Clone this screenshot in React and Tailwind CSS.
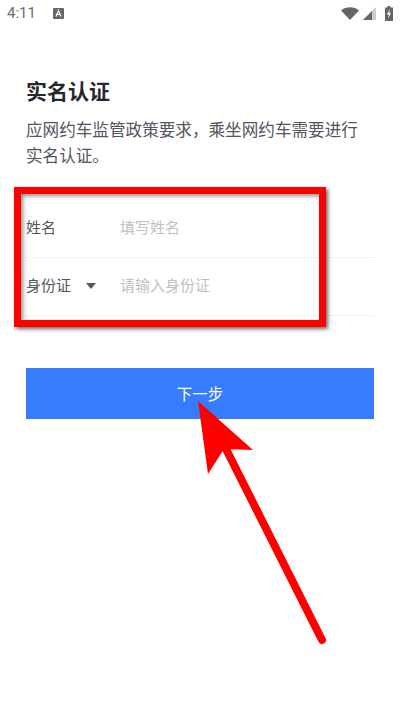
import React from 'react';

const cjk = { fontFamily: '"Noto Sans CJK SC", sans-serif' };

function StatusBar() {
  return (
    <div className="h-[27px] pl-[7px] pr-[7px] flex items-center justify-between">
      <div className="flex items-center gap-[17px]">
        <span className="text-[15px] leading-none text-[#6b6b6b] font-['Roboto',sans-serif]">4:11</span>
        <svg width="11" height="11" viewBox="0 0 11 11">
          <rect width="11" height="11" rx="1" fill="#666" />
          <path d="M3 8.500 5.500 2.500 8 8.500M4 6.500h3" fill="none" stroke="#fff" strokeWidth="1.200" />
        </svg>
      </div>
      <div className="flex items-center gap-[4px]">
        <svg width="18" height="13" viewBox="0 0 18 13">
          <path d="M0 3.500C5-.8 13-.8 18 3.500L9 13Z" fill="#666" />
        </svg>
        <svg width="13" height="13" viewBox="0 0 13 13">
          <path d="M13 0V13H0Z" fill="#ccc" />
          <path d="M9 4V13H0Z" fill="#666" />
        </svg>
        <svg className="ml-[5px]" width="8" height="15" viewBox="0 0 8 15">
          <path d="M2.500 0h3v1.500H8V15H0V1.500h2.500Z" fill="#666" />
          <path d="M4.800 3 2 8.500h1.800L3.200 12.500 6 7H4.200Z" fill="#fff" />
        </svg>
      </div>
    </div>
  );
}

function Field({ label, placeholder, select }) {
  return (
    <div className="h-[58px] pb-[2px] flex items-center border-b border-[#f2f2f4]">
      <div className="w-[94px] flex items-center text-[15px] text-[#55555f]">
        <span>{label}</span>
        {select && <span className="ml-[15px] w-0 h-0 border-x-[5.500px] border-x-transparent border-t-[6px] border-t-[#55555f]" />}
      </div>
      <span className="text-[15px] text-[#c0c0c4]">{placeholder}</span>
    </div>
  );
}

export default function App() {
  return (
    <div className="relative w-[400px] h-[711px] bg-white overflow-hidden" style={cjk}>
      <StatusBar />
      <div className="px-[26px] pt-[48px]">
        <h1 className="text-[21px] leading-[30px] font-bold text-[#26262e]">实名认证</h1>
        <p className="mt-[11px] text-[16.600px] leading-[26px] text-[#55555f]">应网约车监管政策要求，乘坐网约车需要进行实名认证。</p>
        <div className="mt-[32px]">
          <Field label="姓名" placeholder="填写姓名" />
          <Field label="身份证" placeholder="请输入身份证" select />
        </div>
        <button className="mt-[52px] w-full h-[51px] bg-[#377bff] text-white text-[15.500px]">下一步</button>
      </div>

      {/* annotations on top of the screenshot */}
      <div className="absolute left-[14px] top-[187px] w-[312px] h-[140px] border-[7px] border-[#ff0000] shadow-[2px_2px_4px_rgba(0,0,0,0.6),inset_2px_2px_4px_rgba(0,0,0,0.45)]" />
      <svg className="absolute left-0 top-0" width="400" height="711" viewBox="0 0 400 711">
        <path d="M198 401 253 450 224 449 208 474Z" fill="#ff0000" />
        <path d="M224 445 322 640" stroke="#ff0000" strokeWidth="8" strokeLinecap="round" />
      </svg>
    </div>
  );
}
